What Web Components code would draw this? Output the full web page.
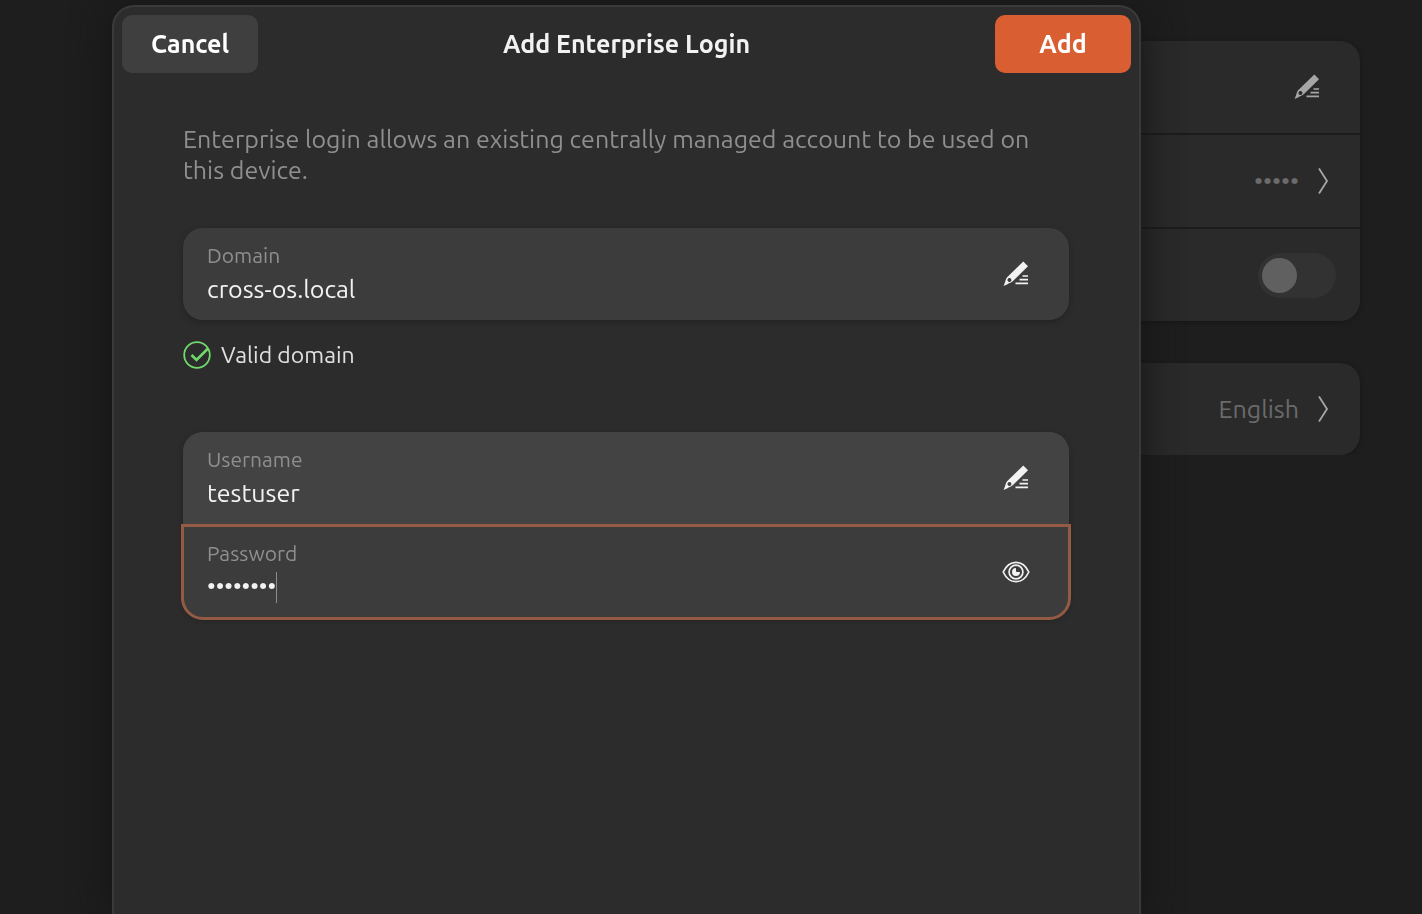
<!DOCTYPE html>
<html lang="en">
<head>
<meta charset="utf-8">
<meta name="viewport" content="width=device-width, initial-scale=1">
<title>Add Enterprise Login</title>
<style>
  html, body { margin: 0; min-height: 100%; }
  body {
    background: #1e1e1e;
    color: #f2f2f2;
    font-family: Ubuntu, "Noto Sans", sans-serif;
    font-size: 25px;
    line-height: 31px;
    overflow: hidden;
  }
</style>
</head>
<body>
<settings-page>
  <settings-card>
    <settings-row><ui-icon name="edit"></ui-icon></settings-row>
    <settings-row><span>•••••</span><ui-icon name="next"></ui-icon></settings-row>
    <settings-row><ui-switch label="Automatic Login"></ui-switch></settings-row>
  </settings-card>
  <settings-card>
    <settings-row><span>English</span><ui-icon name="next"></ui-icon></settings-row>
  </settings-card>
</settings-page>

<login-dialog heading="Add Enterprise Login">
  <p slot="intro">Enterprise login allows an existing centrally managed account to be used on this device.</p>
  <entry-group>
    <entry-row label="Domain" value="cross-os.local" icon="edit" action="Edit domain"></entry-row>
  </entry-group>
  <status-line>Valid domain</status-line>
  <entry-group>
    <entry-row class="hover" label="Username" value="testuser" icon="edit" action="Edit username"></entry-row>
    <entry-row class="focused" label="Password" value="password" type="password" icon="eye" action="Show password"></entry-row>
  </entry-group>
</login-dialog>

<script>
const define = (name, html, setup) => {
  const template = document.createElement('template');
  template.innerHTML = html;
  customElements.define(name, class extends HTMLElement {
    constructor() {
      super();
      this.attachShadow({ mode: 'open' }).append(template.content.cloneNode(true));
    }
    connectedCallback() { if (setup) setup(this, this.shadowRoot); }
  });
};

const ICONS = {
  edit: '<path fill="currentColor" fill-rule="evenodd" d="M21.300 1.600 26 6.300 11 21.100c-1.800 1.800-3.500 1.500-5.500 3.200L1.600 25.900l1.500-4c.7-2 .8-3.500 2.500-5.100zM7 18.100a2 2 0 1 0 2 3.200 2 2 0 0 0-2-3.200z"/><path stroke="currentColor" stroke-width="1.700" d="M20.500 16H26M17.500 19.700H26M13.500 23.400H26"/>',
  next: '<path fill="none" stroke="currentColor" stroke-width="1.800" d="M10 1.500 18 14 10 26.500"/>',
  eye: '<g fill="none" stroke="currentColor" stroke-width="1.700"><path d="M1.200 14C4 8 8.500 4.300 14 4.300S24 8 26.800 14C24 20 19.500 23.700 14 23.700S4 20 1.200 14z"/><circle cx="14" cy="14" r="6.900"/></g><path fill="currentColor" d="M14 10a4 4 0 1 0 4 4h-3a1 1 0 0 1-1-1z"/>',
  check: '<circle cx="14" cy="14" r="12.800" fill="none" stroke="currentColor" stroke-width="1.800"/><path fill="none" stroke="currentColor" stroke-width="2.600" d="M8.500 14 13.500 19 25 7.500"/>'
};

define('ui-icon', `
  <style>
    :host { display: block; flex: none; width: 28px; height: 28px; }
    svg { display: block; width: 100%; height: 100%; }
  </style>
  <svg viewBox="0 0 28 28" aria-hidden="true"></svg>`,
  (el, root) => { root.querySelector('svg').innerHTML = ICONS[el.getAttribute('name')]; });

define('ui-switch', `
  <style>
    :host { display: block; margin-right: -15px; }
    input {
      appearance: none; display: flex; align-items: center;
      box-sizing: border-box; width: 78px; height: 45px; margin: 0; padding: 0 4px;
      border-radius: 23px; background: #323232;
    }
    input::before { content: ""; width: 35px; height: 35px; border-radius: 50%; background: #606060; }
  </style>
  <input type="checkbox" role="switch">`,
  (el, root) => root.querySelector('input').setAttribute('aria-label', el.getAttribute('label')));

define('settings-page', `
  <style>
    :host { display: flex; flex-direction: column; gap: 42px; padding: 41px 62px 0 192px; }
  </style>
  <slot></slot>`);

define('settings-card', `
  <style>
    :host {
      display: flex; flex-direction: column; gap: 2px; overflow: hidden;
      border-radius: 20px; background: #1c1c1c; box-shadow: 0 1px 4px #161616;
    }
  </style>
  <slot></slot>`);

define('settings-row', `
  <style>
    :host {
      display: flex; align-items: center; justify-content: flex-end; gap: 10px;
      box-sizing: border-box; height: 92px; padding-right: 39px;
      background: #2a2a2a; color: #6b6b6b;
    }
    ::slotted(ui-icon) { color: #a6a6a6; }
    ::slotted(ui-icon[name="next"]) { margin-right: -16px; }
  </style>
  <slot></slot>`);

define('login-dialog', `
  <style>
    :host {
      position: fixed; inset: 5px 281px 0 112px;
      display: flex; flex-direction: column; box-sizing: border-box;
      border: 2px solid #3a3a3a; border-bottom: 0; border-radius: 22px 22px 0 0;
      background: #2c2c2c; box-shadow: 0 4px 40px #141414;
    }
    header { display: flex; align-items: center; justify-content: space-between; padding: 8px; }
    h1 { margin: 0; font-size: 25px; font-weight: 600; line-height: 31px; }
    button {
      width: 136px; height: 58px; padding: 0; border: 0; border-radius: 10px;
      background: #3f3f3f; color: #fff; font: inherit; font-weight: 600;
    }
    button.suggested { background: #d95f33; }
    main { display: flex; flex-direction: column; padding: 43px 70px 43px 69px; }
    ::slotted(p) { margin: 0 0 42px; color: #8f8f8f; }
  </style>
  <header>
    <button type="button">Cancel</button>
    <h1></h1>
    <button type="button" class="suggested">Add</button>
  </header>
  <main><slot name="intro"></slot><slot></slot></main>`,
  (el, root) => { root.querySelector('h1').textContent = el.getAttribute('heading'); });

define('entry-group', `
  <style>
    :host { display: flex; flex-direction: column; gap: 2px; border-radius: 20px; background: #3c3c3c; box-shadow: 0 2px 5px #232323; }
    ::slotted(.hover) { background: #434343; border-radius: 20px 20px 0 0; }
    ::slotted(.focused) { border-radius: 0 0 20px 20px; outline: 3px solid #955a43; outline-offset: -1px; }
  </style>
  <slot></slot>`);

define('entry-row', `
  <style>
    :host { display: flex; align-items: center; box-sizing: border-box; height: 92px; padding: 0 39px 0 24px; }
    .field { position: relative; flex: 1; min-width: 0; display: flex; flex-direction: column; }
    label { color: #8f8f8f; font-size: 21px; line-height: 30px; }
    input {
      width: 100%; height: 38px; padding: 0; border: 0; outline: 0; background: none;
      color: #f2f2f2; font: inherit; line-height: 38px;
    }
    input[type="password"] { font-size: 24px; }
    :host(.focused) .field::after {
      content: ""; position: absolute; left: 69px; bottom: 3px; width: 1px; height: 31px; background: #8c8c8c;
    }
    button { display: block; padding: 0; border: 0; background: none; color: #f2f2f2; }
  </style>
  <div class="field"><label for="entry"></label><input id="entry"></div>
  <button type="button"><ui-icon></ui-icon></button>`,
  (el, root) => {
    const input = root.querySelector('input');
    input.type = el.getAttribute('type') || 'text';
    input.value = el.getAttribute('value');
    root.querySelector('label').textContent = el.getAttribute('label');
    root.querySelector('button').setAttribute('aria-label', el.getAttribute('action'));
    const icon = document.createElement('ui-icon');
    icon.setAttribute('name', el.getAttribute('icon'));
    root.querySelector('ui-icon').replaceWith(icon);
  });

define('status-line', `
  <style>
    :host { display: flex; align-items: center; gap: 10px; margin: 20px 0 62px; height: 30px; font-size: 23px; line-height: 30px; color: #e0e0e0; }
    ui-icon { color: #71d96b; }
  </style>
  <ui-icon name="check"></ui-icon><slot></slot>`);
</script>
</body>
</html>
